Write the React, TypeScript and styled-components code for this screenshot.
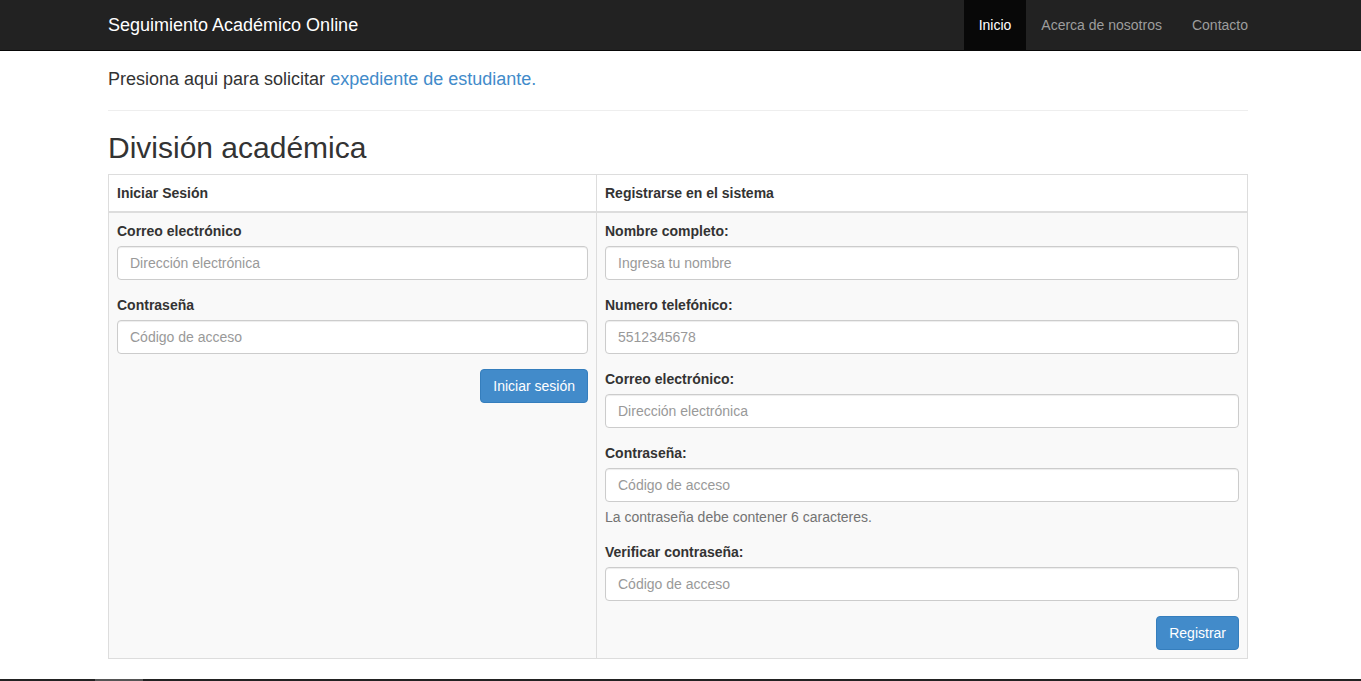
import React from "react";
import styled, { createGlobalStyle } from "styled-components";

const Global = createGlobalStyle`
  html, body { margin: 0; padding: 0; }
  body {
    font-family: "Liberation Sans", Arial, Helvetica, sans-serif;
    font-size: 14px;
    line-height: 1.428571;
    color: #333;
    background: #fff;
  }
  * { box-sizing: border-box; }
`;

const Navbar = styled.nav`
  background: #222;
  border-bottom: 1px solid #080808;
  height: 51px;
`;

const Container = styled.div`
  width: 1140px;
  margin-left: 108px;
`;

const NavInner = styled(Container)`
  display: flex;
  align-items: stretch;
  justify-content: space-between;
  height: 50px;
`;

const Brand = styled.a`
  display: block;
  padding-top: 14px;
  font-size: 18px;
  line-height: 22px;
  color: #fff;
  text-decoration: none;
`;

const NavList = styled.ul`
  display: flex;
  list-style: none;
  margin: 0 -15px 0 0;
  padding: 0;
`;

const NavItem = styled.li<{ $active?: boolean }>`
  padding: 15px 15px;
  line-height: 20px;
  font-size: 14px;
  color: ${(p) => (p.$active ? "#fff" : "#9d9d9d")};
  background: ${(p) => (p.$active ? "#080808" : "transparent")};
`;

const Lead = styled.p`
  font-size: 18px;
  line-height: 26px;
  margin: 15px 0 0;
`;

const Link = styled.a`
  color: #428bca;
  text-decoration: none;
`;

const Rule = styled.hr`
  border: 0;
  border-top: 1px solid #eee;
  margin: 18px 0 0;
`;

const Heading = styled.h2`
  font-size: 30px;
  font-weight: 500;
  line-height: 33px;
  margin: 20px 0 10px;
`;

const Table = styled.div`
  display: grid;
  grid-template-columns: 488px 1fr;
  border: 1px solid #ddd;
  margin-bottom: 20px;
`;

const HeadCell = styled.div<{ $first?: boolean }>`
  padding: 8px;
  font-weight: bold;
  line-height: 20px;
  background: #fff;
  border-bottom: 2px solid #ddd;
  border-right: ${(p) => (p.$first ? "1px solid #ddd" : "0")};
`;

const BodyCell = styled.div<{ $first?: boolean }>`
  padding: 8px;
  background: #f9f9f9;
  border-right: ${(p) => (p.$first ? "1px solid #ddd" : "0")};
`;

const Group = styled.div`
  margin-bottom: 15px;
`;

const Label = styled.label`
  display: inline-block;
  font-weight: bold;
  margin-bottom: 5px;
  line-height: 20px;
`;

const Input = styled.input`
  display: block;
  width: 100%;
  height: 34px;
  padding: 6px 12px;
  font-family: inherit;
  font-size: 14px;
  color: #555;
  background: #fff;
  border: 1px solid #ccc;
  border-radius: 4px;
  box-shadow: inset 0 1px 1px rgba(0, 0, 0, 0.075);
  &::placeholder { color: #999; }
`;

const Help = styled.p`
  margin: 5px 0 10px;
  color: #737373;
  line-height: 20px;
`;

const Actions = styled.div`
  display: flex;
  justify-content: flex-end;
`;

const Button = styled.button`
  height: 34px;
  padding: 6px 12px;
  font-family: inherit;
  font-size: 14px;
  line-height: 20px;
  color: #fff;
  background: #428bca;
  border: 1px solid #357ebd;
  border-radius: 4px;
`;

const Footer = styled.div`
  height: 2px;
  background: #222;
  display: flex;
`;

const FooterThumb = styled.div`
  margin-left: 95px;
  width: 48px;
  background: #555;
`;

export default function App() {
  return (
    <>
      <Global />
      <Navbar>
        <NavInner>
          <Brand>Seguimiento Académico Online</Brand>
          <NavList>
            <NavItem $active>Inicio</NavItem>
            <NavItem>Acerca de nosotros</NavItem>
            <NavItem>Contacto</NavItem>
          </NavList>
        </NavInner>
      </Navbar>
      <Container>
        <Lead>
          Presiona aqui para solicitar <Link>expediente de estudiante.</Link>
        </Lead>
        <Rule />
        <Heading>División académica</Heading>
        <Table>
          <HeadCell $first>Iniciar Sesión</HeadCell>
          <HeadCell>Registrarse en el sistema</HeadCell>
          <BodyCell $first>
            <Group>
              <Label>Correo electrónico</Label>
              <Input placeholder="Dirección electrónica" />
            </Group>
            <Group>
              <Label>Contraseña</Label>
              <Input type="password" placeholder="Código de acceso" />
            </Group>
            <Actions>
              <Button>Iniciar sesión</Button>
            </Actions>
          </BodyCell>
          <BodyCell>
            <Group>
              <Label>Nombre completo:</Label>
              <Input placeholder="Ingresa tu nombre" />
            </Group>
            <Group>
              <Label>Numero telefónico:</Label>
              <Input placeholder="5512345678" />
            </Group>
            <Group>
              <Label>Correo electrónico:</Label>
              <Input placeholder="Dirección electrónica" />
            </Group>
            <Group>
              <Label>Contraseña:</Label>
              <Input type="password" placeholder="Código de acceso" />
              <Help>La contraseña debe contener 6 caracteres.</Help>
            </Group>
            <Group>
              <Label>Verificar contraseña:</Label>
              <Input type="password" placeholder="Código de acceso" />
            </Group>
            <Actions>
              <Button>Registrar</Button>
            </Actions>
          </BodyCell>
        </Table>
      </Container>
      <Footer>
        <FooterThumb />
      </Footer>
    </>
  );
}
